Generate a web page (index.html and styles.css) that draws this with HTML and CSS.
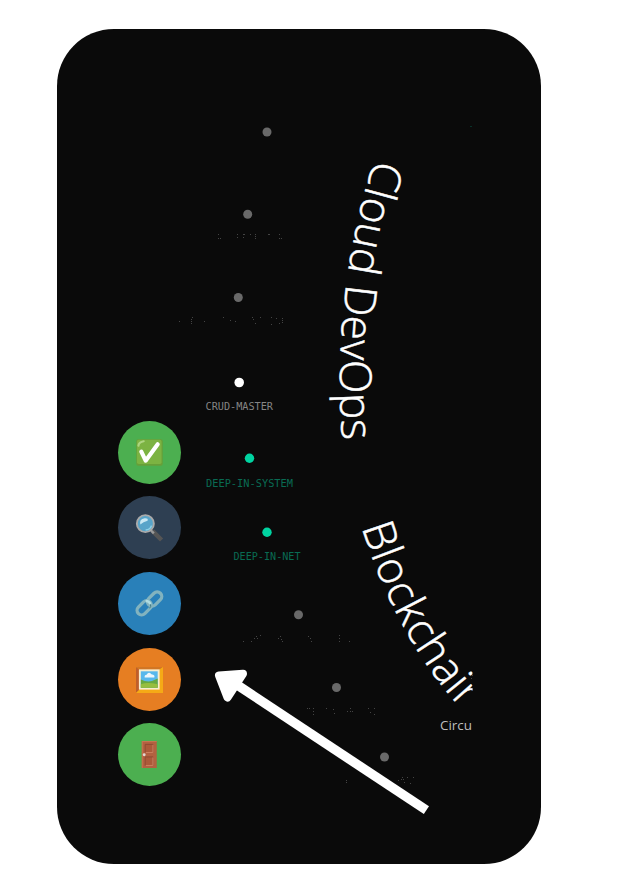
FILE: index.html
```html
<!DOCTYPE html>
<html lang="en">
<head>
<meta charset="utf-8">
<title>Skill map</title>
<link rel="stylesheet" href="styles.css">
</head>
<body>
<main class="panel">
  <svg class="map" viewBox="57 29 484 835" width="484" height="835">
    <defs>
      <path id="arc-cloud" d="M374.500 159A730 730 0 0 0 344 460"/>
      <path id="arc-chain" d="M361.500 527Q395 633 457 704L500 753"/>
      <clipPath id="edge"><path d="M57 29H472.500V693L461 704H57z"/></clipPath>
    </defs>
    <g class="node">
      <circle cx="267" cy="132" r="4.5"/><circle cx="247.7" cy="214.3" r="4.5"/>
      <circle cx="238.3" cy="297.5" r="4.5"/><circle cx="298.5" cy="614.7" r="4.5"/>
      <circle cx="336.5" cy="687.5" r="4.5"/><circle cx="384.5" cy="757" r="4.5"/>
    </g>
    <circle class="current" cx="239.2" cy="382.5" r="4.8"/>
    <g class="done"><circle cx="249.5" cy="458.3" r="4.7"/><circle cx="267" cy="532.3" r="4.7"/></g>
    <text class="label" x="205.5" y="410" textLength="67.5" lengthAdjust="spacingAndGlyphs">CRUD-MASTER</text>
    <text class="label green" x="206" y="486.500" textLength="87" lengthAdjust="spacingAndGlyphs">DEEP-IN-SYSTEM</text>
    <text class="label green" x="233.500" y="560" textLength="67" lengthAdjust="spacingAndGlyphs">DEEP-IN-NET</text>
    <path class="specks" d="M218 234.500h1M218 238.500h1M220 238.500h1M237 234.500h1M237 237.500h1M243 234.500h2M243 237.500h1M250 234.500h1M255 234.500h1M255 238.500h1M255 236.500h1M268 234.500h2M279 234.500h1M279 238.500h1M281 238.500h1
      M179 321.500h1M192 317.500h1M191 319.500h1M191 321.500h1M191 323.500h1M204 321.500h1M223 317.500h1M230 320.500h1M235 321.500h1M252 317.500h1M253 319.500h1M255 323.500h1M260 317.500h1M271 317.500h1M271 324.500h1M276 318.500h1M279 323.500h1M282 318.500h1M282 320.500h1M282 322.500h1
      M243 641.500h1M251 641.500h1M254 638.500h1M256 636.500h1M257 638.500h1M260 635.500h1M278 638.500h1M280 636.500h1M281 639.500h1M282 641.500h1M308 636.500h1M310 638.500h1M311 641.500h1M339 635.500h1M339 638.500h1M339 641.500h1M349 641.500h1
      M307 708.500h1M309 708.500h1M313 708.500h1M313 711.500h1M313 714.500h1M326 708.500h1M333 709.500h1M334 713.500h1M347 711.500h1M350 708.500h1M350 711.500h1M352 711.500h1M368 708.500h1M370 712.500h1M374 708.500h1M374 714.500h1
      M346 780.500h1M346 782.500h1M398 780.500h1M401 779.500h1M402 777.500h1M403 779.500h1M404 782.500h1M407 777.500h1M410 783.500h1M413 777.500h1M472 675.500h1M471 678.500h1"/>
    <path class="teal-speck" d="M470 126.500h2"/>
    <g clip-path="url(#edge)">
      <text class="track"><textPath href="#arc-cloud" textLength="285">Cloud DevOps</textPath></text>
      <text class="track"><textPath href="#arc-chain" textLength="219">Blockchain</textPath></text>
    </g>
    <text class="topic" x="440" y="730" textLength="32" lengthAdjust="spacingAndGlyphs">Circu</text>
  </svg>
  <nav class="tools">
    <button class="tool green-bg" aria-label="Check">
      <svg viewBox="0 0 28 28"><rect x=".3" y=".3" width="27.400" height="27.400" rx="2" fill="#689f38"/><rect x="1" y=".8" width="25.500" height="25" rx="1.800" fill="#7cb342"/><path d="M2.500 7Q3 3 8 2.300" fill="none" stroke="#aed581" stroke-width="2.200" stroke-linecap="round"/><path d="M5.500 13L10 22.500L22.500 5.500" fill="none" stroke="#fff" stroke-width="4.300" stroke-linecap="round" stroke-linejoin="round"/></svg>
    </button>
    <button class="tool slate-bg" aria-label="Search">
      <svg viewBox="0 0 28 28"><path d="M17 17.500L26.500 27" stroke="#555" stroke-width="4.600"/><path d="M15.500 17L18.500 20" stroke="#9b9b9b" stroke-width="2.500"/><circle cx="9.700" cy="10" r="8.800" fill="#58a4c9" stroke="#aaa" stroke-width="2"/><path d="M4.500 11Q3 5.500 9 4.500Q13 4.200 12 7Q7.500 8 4.500 11z" fill="#c9e8f3"/><path d="M10 16.500Q15 16 16 12" fill="none" stroke="#8fd2e8" stroke-width="1.500"/></svg>
    </button>
    <button class="tool blue-bg" aria-label="Link">
      <svg viewBox="0 0 28 28" fill="none" stroke="#82b3bf" stroke-width="3.400"><rect x="10.800" y="4.700" width="17" height="9.400" rx="4.700" transform="rotate(-45 19.300 9.400)"/><rect x="0" y="13.700" width="17" height="9.400" rx="4.700" transform="rotate(-45 8.500 18.400)"/><path d="M10 11.500Q13 11 15 14.500" stroke="#b0dce2" stroke-width="2.500"/><path d="M15 15Q16 17 14 19" stroke="#3e777f" stroke-width="1"/></svg>
    </button>
    <button class="tool orange-bg" aria-label="Image">
      <svg viewBox="0 0 28 28"><path d="M0 1H28V28H0z" fill="#ed9018"/><path d="M0 1L4 4V24L0 28z" fill="#bf5f2a"/><path d="M0 1H28L24 4H4z" fill="#d17625"/><path d="M28 1V28H0L4 24H24V4z" fill="#f5aa16"/><path d="M3 3.500H24.500V24.500H3z" fill="#f8eed0"/><path d="M5 5.500H22.500V22.500H5z" fill="#58b8ec"/><path d="M5 14Q9 16 13 16T22.500 13V22.500H5z" fill="#66a943"/><path d="M5 19Q12 16 22.500 19V22.500H5z" fill="#96be3f"/><path d="M9 12Q8.500 9 11 9Q13 5.500 16 8.500Q20 9 19 12z" fill="#edf7fc"/></svg>
    </button>
    <button class="tool green-bg" aria-label="Exit">
      <svg viewBox="0 0 28 28"><path d="M6 0H21.500V28H6z" fill="#b36140"/><path d="M6 0H21.500V1H7V28H6z" fill="#c47450"/><g fill="#ac5a39" stroke="#8d4932"><path d="M9.500 3.500H17.500V12H9.500zM9.500 16.500H17.500V25.500H9.500z"/></g><path d="M10 12H17.500V4M10 25.500H17.500V17" fill="none" stroke="#d18461"/><circle cx="8.500" cy="14.200" r="1.500" fill="#e0d7d1"/></svg>
    </button>
  </nav>
  <svg class="arrow" viewBox="57 29 484 835" width="484" height="835">
    <path class="shaft" d="M232 681.500L426.400 810.200"/>
    <path class="head" d="M219 675.500L243 673.700L227.500 697.500z"/>
  </svg>
</main>
</body>
</html>
```

FILE: styles.css
```css
* { box-sizing: border-box; }
body { margin: 0; background: #fff; height: 896px; overflow: hidden; font-family: "Open Sans", "Noto Sans", sans-serif; display: flow-root; }
.panel { position: relative; width: 484px; height: 835px; margin: 29px 0 0 57px; border-radius: 57px; background: #0a0a0a; overflow: hidden; display: flex; align-items: flex-end; padding: 0 0 77.600px 61px; }
.map, .arrow { position: absolute; inset: 0; }
.arrow { pointer-events: none; }
.tools { position: relative; display: flex; flex-direction: column; gap: 12.7px; }
.tool { width: 63px; height: 63px; border: 0; border-radius: 50%; padding: 0; display: grid; place-items: center; }
.tool svg { width: 27px; height: 27px; display: block; overflow: visible; }
.green-bg { background: #4caf50; }
.slate-bg { background: #2e3f52; }
.blue-bg { background: #2980b9; }
.orange-bg { background: #e67e22; }
.node { fill: #696969; }
.current { fill: #fff; }
.done { fill: #00d4a1; }
.label { font: 10.5px "DejaVu Sans Mono", monospace; fill: #858585; }
.label.green { fill: #096b53; }
.specks { stroke: #444; stroke-width: 1; shape-rendering: crispEdges; }
.teal-speck { stroke: #083128; }
.track { font-size: 44px; font-weight: 300; fill: #fff; stroke: #fff; stroke-width: .5; }
.topic { font-size: 13.5px; fill: #bdbdbd; }
.shaft { stroke: #fff; stroke-width: 9.4; }
.head { fill: #fff; stroke: #fff; stroke-width: 8; stroke-linejoin: round; }
```
